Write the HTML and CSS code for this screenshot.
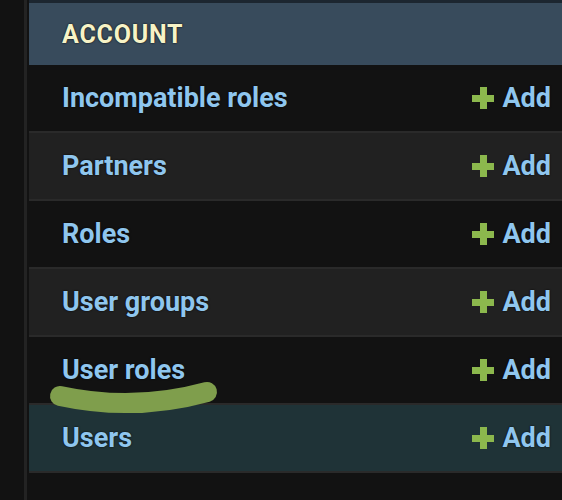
FILE: index.html
```html
<!DOCTYPE html>
<html lang="en">
<head>
    <meta charset="UTF-8">
    <meta name="viewport" content="width=device-width, initial-scale=1.0">
    <title>Site administration</title>
    <link rel="stylesheet" href="styles.css">
</head>
<body>
    <div class="sidebar"></div>

    <div class="module">
        <div class="caption">Account</div>
        <div class="row">
            <a class="model">Incompatible roles</a>
            <a class="add"><span class="plus"></span>Add</a>
        </div>
        <div class="row">
            <a class="model">Partners</a>
            <a class="add"><span class="plus"></span>Add</a>
        </div>
        <div class="row">
            <a class="model">Roles</a>
            <a class="add"><span class="plus"></span>Add</a>
        </div>
        <div class="row">
            <a class="model">User groups</a>
            <a class="add"><span class="plus"></span>Add</a>
        </div>
        <div class="row">
            <a class="model">User roles</a>
            <a class="add"><span class="plus"></span>Add</a>
        </div>
        <div class="row current">
            <a class="model">Users</a>
            <a class="add"><span class="plus"></span>Add</a>
        </div>
    </div>

    <svg class="scribble" width="562" height="500" viewBox="0 0 562 500">
        <path d="M60 396 Q134 412 207 392" fill="none" stroke="#7f9e4c" stroke-width="20" stroke-linecap="round"/>
    </svg>
</body>
</html>
```

FILE: styles.css
```css
body {
    margin: 0;
    background-color: #121212;
    display: flex;
    font-family: Roboto, "Liberation Sans", sans-serif;
    height: 500px;
    overflow: hidden;
}

.sidebar {
    width: 24px;
    flex: none;
    border-right: 3px solid #232323;
}

.module {
    flex: 1;
    margin-left: 2px;
}

.caption {
    height: 62px;
    border-top: 3px solid #1c2630;
    background-color: #384b5c;
    color: #f7f3c6;
    font-size: 25px;
    font-weight: 700;
    text-transform: uppercase;
    letter-spacing: 0.8px;
    display: flex;
    align-items: center;
    padding-left: 33px;
    text-shadow: 0 0 2px #000;
}

.row {
    height: 66px;
    border-bottom: 2px solid #2a2a2a;
    background-color: #121212;
    display: flex;
    align-items: center;
    justify-content: space-between;
    padding: 0 11px 0 33px;
    font-size: 27px;
    font-weight: 700;
    color: #8fc6ee;
    text-shadow: 0 0 2px #000;
}

.row:nth-child(odd) {
    background-color: #212121;
}

.row.current {
    background-color: #1f3337;
}

.add {
    display: flex;
    align-items: center;
    gap: 8px;
}

.plus {
    width: 22px;
    height: 22px;
    background:
        linear-gradient(#8cb84d, #8cb84d) center / 7px 100% no-repeat,
        linear-gradient(#8cb84d, #8cb84d) center / 100% 7px no-repeat;
    border-radius: 2px;
}

.scribble {
    position: absolute;
    left: 0;
    top: 0;
    pointer-events: none;
}
```
